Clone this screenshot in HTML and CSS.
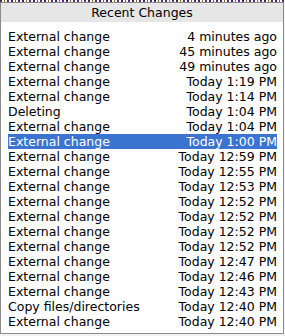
FILE: index.html
```html
<!DOCTYPE html>
<html lang="en">
  <head>
    <meta charset="UTF-8" />
    <title>Recent Changes</title>
    <link rel="stylesheet" href="styles.css">
  </head>
  <body>
    <!-- sliver of the window behind the popup -->
    <div class="behind"></div>

    <div class="popup">
      <div class="popup-title">Recent Changes</div>
      <ul class="changes">
        <li><span>External change</span><span>4 minutes ago</span></li>
        <li><span>External change</span><span>45 minutes ago</span></li>
        <li><span>External change</span><span>49 minutes ago</span></li>
        <li><span>External change</span><span>Today 1:19 PM</span></li>
        <li><span>External change</span><span>Today 1:14 PM</span></li>
        <li><span>Deleting</span><span>Today 1:04 PM</span></li>
        <li><span>External change</span><span>Today 1:04 PM</span></li>
        <li class="selected"><span>External change</span><span>Today 1:00 PM</span></li>
        <li><span>External change</span><span>Today 12:59 PM</span></li>
        <li><span>External change</span><span>Today 12:55 PM</span></li>
        <li><span>External change</span><span>Today 12:53 PM</span></li>
        <li><span>External change</span><span>Today 12:52 PM</span></li>
        <li><span>External change</span><span>Today 12:52 PM</span></li>
        <li><span>External change</span><span>Today 12:52 PM</span></li>
        <li><span>External change</span><span>Today 12:52 PM</span></li>
        <li><span>External change</span><span>Today 12:47 PM</span></li>
        <li><span>External change</span><span>Today 12:46 PM</span></li>
        <li><span>External change</span><span>Today 12:43 PM</span></li>
        <li><span>Copy files/directories</span><span>Today 12:40 PM</span></li>
        <li><span>External change</span><span>Today 12:40 PM</span></li>
      </ul>
    </div>
  </body>
</html>
```

FILE: styles.css
```css
* {
  box-sizing: border-box;
}
body {
  margin: 0;
  font-family: "DejaVu Sans", sans-serif;
  font-size: 12.5px;
  color: #000;
  background-color: #f2f2f2;
}
.behind {
  height: 2px;
  background-color: #fff;
  background-image: repeating-linear-gradient(
    90deg,
    #3a2a5a 0 2px,
    #fff 2px 4px,
    #8a5a20 4px 5px,
    #fff 5px 7px,
    #5a2a8a 7px 9px,
    #fff 9px 11px
  );
}
.popup {
  width: 284px;
  height: 332px;
  border: 1px solid #8c8c8c;
  background-color: #fff;
}
.popup-title {
  height: 19px;
  line-height: 19px;
  text-align: center;
  background-color: #e6e6e6;
}
.changes {
  list-style: none;
  margin: 0;
  padding: 7px 6px 0 7px;
}
.changes li {
  display: flex;
  justify-content: space-between;
  height: 15px;
  line-height: 15px;
  white-space: nowrap;
}
.changes li.selected {
  background-color: #3b73d1;
  color: #fff;
}
```
